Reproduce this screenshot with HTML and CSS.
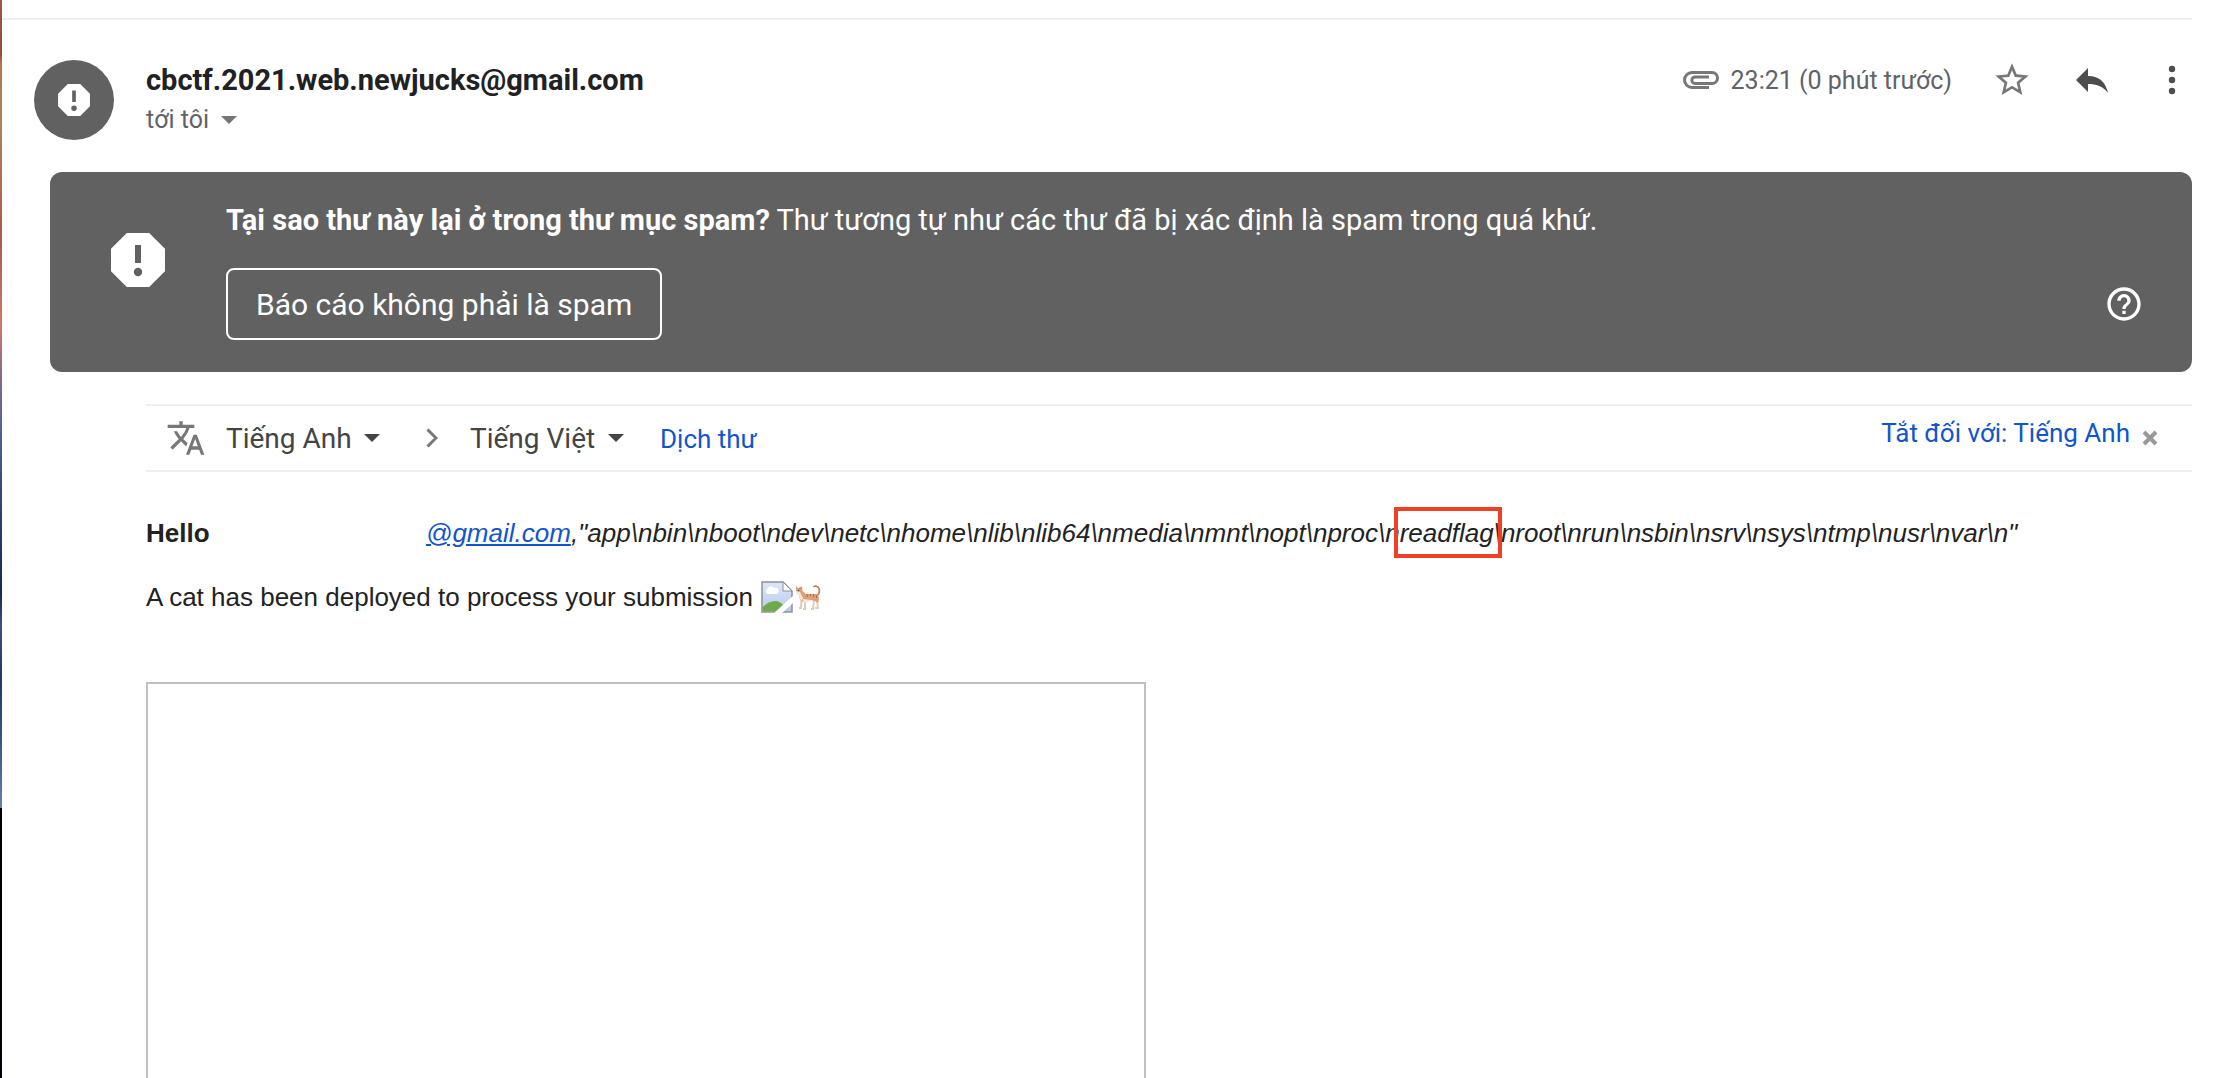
FILE: index.html
```html
<!DOCTYPE html>
<html lang="vi">
<head>
<meta charset="utf-8">
<meta name="viewport" content="width=device-width, initial-scale=1">
<title>Gmail</title>
<link rel="stylesheet" href="styles.css">
</head>
<body>
<div class="desktop-edge"></div>
<main class="message">
  <header class="message-header">
    <div class="avatar">
      <svg width="44" height="44" viewBox="0 0 24 24" aria-hidden="true"><path fill="#fff" fill-rule="evenodd" d="M15.4 3.3H8.6L3.3 8.6v6.8l5.3 5.3h6.8l5.3-5.3V8.6zM11 6.8h2v6.3h-2zM12 15a1.5 1.5 0 1 1 0 3 1.5 1.5 0 0 1 0-3z"/></svg>
    </div>
    <div class="sender">
      <h1 class="sender-address">cbctf.2021.web.newjucks@gmail.com</h1>
      <button class="recipient" type="button">tới tôi
        <svg width="16" height="8" viewBox="0 0 16 8" aria-hidden="true"><path fill="#757575" d="M0 0h16L8 8z"/></svg>
      </button>
    </div>
    <div class="actions">
      <div class="received">
        <svg width="36" height="18" viewBox="0 0 36 18" aria-hidden="true"><path fill="none" stroke="#777" stroke-width="3" d="M26 16.500H9a7.500 7.500 0 0 1 0-15h20a5.500 5.500 0 0 1 0 11H12a3.200 3.200 0 0 1 0-6.400h14"/></svg>
        <time>23:21 (0 phút trước)</time>
      </div>
      <button class="icon-button" type="button" aria-label="Gắn dấu sao"><svg width="40" height="40" viewBox="0 0 24 24"><path fill="#777" d="M22 9.240l-7.190-.62L12 2 9.190 8.630 2 9.240l5.460 4.730L5.820 21 12 17.270 18.180 21l-1.630-7.030L22 9.240zM12 15.400l-3.760 2.270 1-4.280-3.320-2.880 4.380-.38L12 6.100l1.710 4.040 4.380.38-3.320 2.880 1 4.280L12 15.400z"/></svg></button>
      <button class="icon-button" type="button" aria-label="Trả lời"><svg width="40" height="40" viewBox="0 0 40 40"><path fill="#4d4d4d" d="M16 16V8L4 20l12 12v-8c8 0 15 2 20 9-2-10-8-17-20-17z"/></svg></button>
      <button class="icon-button" type="button" aria-label="Khác"><svg width="40" height="40" viewBox="0 0 40 40"><g fill="#4d4d4d"><circle cx="20" cy="9" r="3.200"/><circle cx="20" cy="20" r="3.200"/><circle cx="20" cy="31" r="3.200"/></g></svg></button>
    </div>
  </header>

  <section class="spam-banner">
    <svg class="spam-icon" width="72" height="72" viewBox="0 0 24 24" aria-hidden="true"><path fill="#fff" fill-rule="evenodd" d="M15.730 3H8.270L3 8.270v7.460L8.270 21h7.460L21 15.730V8.270zM11 7h2v6h-2zM12 14.600a1.400 1.400 0 1 1 0 2.800 1.400 1.400 0 0 1 0-2.800z"/></svg>
    <div class="spam-content">
      <p class="spam-text"><strong>Tại sao thư này lại ở trong thư mục spam?</strong> Thư tương tự như các thư đã bị xác định là spam trong quá khứ.</p>
      <button class="not-spam" type="button">Báo cáo không phải là spam</button>
    </div>
    <button class="icon-button" type="button" aria-label="Trợ giúp"><svg width="40" height="40" viewBox="0 0 24 24"><path fill="#fff" d="M11 18h2v-2h-2v2zm1-16C6.480 2 2 6.480 2 12s4.480 10 10 10 10-4.480 10-10S17.520 2 12 2zm0 18c-4.410 0-8-3.590-8-8s3.590-8 8-8 8 3.590 8 8-3.590 8-8 8zm0-14c-2.210 0-4 1.790-4 4h2c0-1.100.9-2 2-2s2 .9 2 2c0 2-3 1.750-3 5h2c0-2.250 3-2.500 3-5 0-2.210-1.790-4-4-4z"/></svg></button>
  </section>

  <section class="translate-bar">
    <svg class="translate-icon" width="40" height="40" viewBox="0 0 24 24" aria-hidden="true"><path fill="#777" d="M12.870 15.070l-2.540-2.510.03-.03c1.740-1.940 2.980-4.170 3.710-6.530H17V4h-7V2H8v2H1v1.990h11.170C11.500 7.920 10.440 9.750 9 11.350 8.070 10.320 7.300 9.190 6.690 8h-2c.73 1.630 1.730 3.170 2.980 4.560l-5.090 5.020L4 19l5-5 3.110 3.110.76-2.040zM18.500 10h-2L12 22h2l1.120-3h4.750L21 22h2l-4.500-12zm-2.620 7l1.620-4.330L19.120 17h-3.240z"/></svg>
    <label class="language">
      <select aria-label="Ngôn ngữ nguồn"><option>Tiếng Anh</option></select>
      <svg width="16" height="8" viewBox="0 0 16 8" aria-hidden="true"><path fill="#444" d="M0 0h16L8 8z"/></svg>
    </label>
    <svg class="chevron" width="12" height="20" viewBox="0 0 12 20" aria-hidden="true"><path fill="none" stroke="#777" stroke-width="3" d="M1.500 1.500 10 10l-8.500 8.500"/></svg>
    <label class="language">
      <select aria-label="Ngôn ngữ đích"><option>Tiếng Việt</option></select>
      <svg width="16" height="8" viewBox="0 0 16 8" aria-hidden="true"><path fill="#444" d="M0 0h16L8 8z"/></svg>
    </label>
    <a class="translate-link" href="#">Dịch thư</a>
    <a class="turn-off" href="#">Tắt đối với: Tiếng Anh</a>
    <button class="close" type="button" aria-label="Đóng"><svg width="16" height="16" viewBox="0 0 16 16"><path fill="none" stroke="#999" stroke-width="4" d="m2 2 12 12M14 2 2 14"/></svg></button>
  </section>

  <article class="mail-body">
    <p class="greeting"><b class="hello">Hello</b><i><a href="#">@gmail.com</a>,"app\nbin\nboot\ndev\netc\nhome\nlib\nlib64\nmedia\nmnt\nopt\nproc\n<span class="flagged">readflag</span>\nroot\nrun\nsbin\nsrv\nsys\ntmp\nusr\nvar\n"</i></p>
    <p class="notice">A cat has been deployed to process your submission
      <span class="pictures"><svg width="32" height="32" viewBox="0 0 32 32" aria-hidden="true"><defs><linearGradient id="sky" x2="0" y2="1"><stop stop-color="#dce6fa"/><stop offset="1" stop-color="#b9c8ee"/></linearGradient></defs><path fill="url(#sky)" stroke="#8e9192" stroke-width="1.500" d="M1 1h21l9 9v21H1z"/><path fill="#fff" stroke="#8e9192" d="M22 1v9h9z"/><path fill="#fff" d="M6 13a3 3 0 0 1 0-5 4 4 0 0 1 7-1 3 3 0 0 1 3 6z"/><path fill="#6cab48" d="M1.700 30.300V26Q8 20 14 20q5 0 9 5l-4 5.300z"/><path fill="#fff" d="M13 32 32 15v7L21 32z"/></svg><svg width="26" height="26" viewBox="0 0 26 26" aria-hidden="true"><path fill="none" stroke="#c9825a" stroke-width="1.800" stroke-linecap="round" d="M21 12c5-2 4-9 0-10l-2 .5"/><path fill="none" stroke="#dccdc0" stroke-width="2" d="M6.500 14 6 24H4m6-7v8H8m11-9-1 9h-2m6-9 1 8h-3"/><path fill="#df9f75" d="m1 2 2 2h2l2-2 .6 5L11 10h10q3 1 3 5l-1 4-3-2-4-1-8 2-3-2-1-6-3-2z"/><path fill="#f3e7dc" d="m1 7 4 1 3 6-1 3-2-2-1-4-3-1zM8 15l8 1-2 2-6 1z"/><path stroke="#b9683f" d="m12 10 .5 3m3-3v2m3-2v3m3-2v3M5 3v2"/><circle cx="3.500" cy="6.500" r=".7" fill="#333"/></svg></span>
    </p>
    <div class="frame"></div>
  </article>
</main>
</body>
</html>
```

FILE: styles.css
```css
* {
  box-sizing: border-box;
}

body {
  margin: 0;
  min-height: 100vh;
  display: flex;
  background: #fff;
  color: #202124;
  font-family: Roboto, "Noto Sans", sans-serif;
}

h1,
p {
  margin: 0;
}

svg {
  display: block;
  flex: none;
}

button,
select {
  margin: 0;
  padding: 0;
  border: 0;
  background: none;
  color: inherit;
  font: inherit;
}

a {
  color: #15c;
  text-decoration: none;
}

/* Sliver of desktop wallpaper beside the window */
.desktop-edge {
  flex: none;
  width: 2px;
  background: linear-gradient(#9a5a48, #8f5038 5%, #b07a50 6%, #b08058 12%, #a85c4a 22%, #d07868 30%, #786890 36%, #4a6090 41%, #304878 46%, #182850 55%, #405080 58%, #203868 63%, #385888 69%, #6880a8 75%, #000 75%, #000008);
}

.message {
  flex: 1;
  min-width: 0;
  padding: 18px 26px 0 0;
  display: flex;
  flex-direction: column;
}

.message-header {
  display: flex;
  gap: 32px;
  padding: 40px 0 32px 32px;
  border-top: 2px solid #eee;
}

.avatar {
  flex: none;
  display: grid;
  place-items: center;
  width: 80px;
  height: 80px;
  border-radius: 50%;
  background: #616161;
}

.sender {
  flex: 1;
  display: flex;
  flex-direction: column;
  align-items: flex-start;
  gap: 8px;
  padding-top: 4px;
}

.sender-address {
  font-size: 29px;
  line-height: 32px;
  font-weight: 700;
}

.recipient {
  display: flex;
  align-items: center;
  gap: 12px;
  color: #5f6368;
  font-size: 25px;
  line-height: 32px;
}

.actions {
  display: flex;
  align-items: center;
  gap: 40px;
  height: 40px;
}

.received {
  display: flex;
  align-items: center;
  gap: 12px;
  color: #5f6368;
  font-size: 25px;
  white-space: nowrap;
}

.icon-button {
  flex: none;
}

.spam-banner {
  display: flex;
  align-items: center;
  margin-left: 48px;
  padding: 32px 48px 32px 52px;
  border-radius: 12px;
  background: #616161;
  color: #fff;
}

.spam-icon {
  align-self: flex-start;
  margin-top: 20px;
}

.spam-content {
  flex: 1;
  margin-left: 52px;
}

.spam-text {
  margin-bottom: 32px;
  font-size: 29px;
  line-height: 32px;
}

.not-spam {
  height: 72px;
  padding: 0 28px;
  border: 2px solid #fff;
  border-radius: 8px;
  font-size: 30px;
}

.spam-banner .icon-button {
  align-self: flex-end;
  margin-bottom: 16px;
}

.translate-bar {
  display: flex;
  align-items: center;
  height: 68px;
  margin: 32px 0 0 144px;
  padding: 0 34px 0 20px;
  border: solid #eee;
  border-width: 2px 0;
  color: #444;
  font-size: 28px;
}

.language {
  display: flex;
  align-items: center;
  gap: 12px;
}

.language select {
  appearance: none;
}

.translate-icon {
  margin-right: 20px;
}

.chevron {
  margin: 0 32px 0 46px;
}

.translate-link {
  margin-left: 36px;
  padding-top: 2px;
  font-size: 26px;
}

.turn-off {
  margin-left: auto;
  padding-bottom: 10px;
  font-size: 26px;
}

.close {
  margin-left: 12px;
}

.mail-body {
  flex: 1;
  display: flex;
  flex-direction: column;
  margin-left: 144px;
  padding-top: 45px;
  font-family: "Liberation Sans", Arial, sans-serif;
  font-size: 26px;
  line-height: 32px;
  color: #222;
}

.greeting {
  display: flex;
  white-space: nowrap;
}

.hello {
  width: 280px;
}

.greeting a {
  text-decoration: underline;
}

.flagged {
  position: relative;
}

/* Red marker drawn over the line, round the flagged word */
.flagged::after {
  content: "";
  position: absolute;
  inset: -11px -8px -10px -6px;
  border: 4px solid #ef4026;
}

.notice {
  display: flex;
  align-items: center;
  gap: 8px;
  margin-top: 32px;
}

.pictures {
  display: flex;
  align-items: center;
  gap: 2px;
}

.frame {
  flex: 1;
  width: 1000px;
  max-width: 100%;
  margin-top: 69px;
  border: 2px solid #c0c0c0;
  border-bottom: 0;
}
```
